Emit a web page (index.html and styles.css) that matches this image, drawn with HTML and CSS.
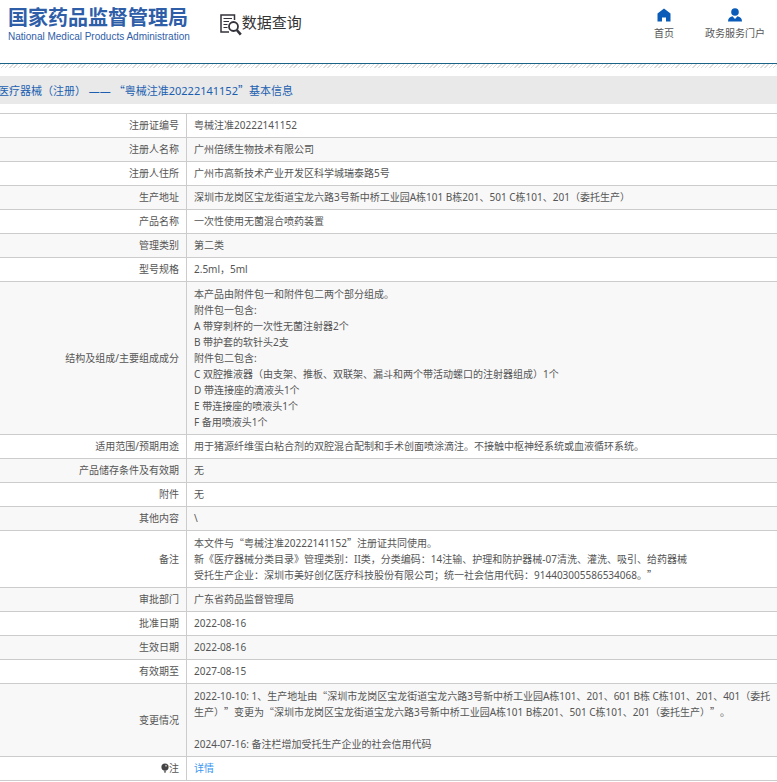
FILE: index.html
```html
<!DOCTYPE html>
<html lang="zh-CN">
<head>
    <meta charset="UTF-8">
    <meta name="viewport" content="width=device-width, initial-scale=1.0">
    <title>国家药品监督管理局 - 数据查询</title>
    <link rel="stylesheet" href="styles.css">
</head>
<body>
    <header class="header">
        <a href="#" class="logo">
            <span class="logo-cn">国家药品监督管理局</span>
            <span class="logo-en">National Medical Products Administration</span>
        </a>
        <a href="#" class="query">
            <svg class="query-icon" width="22" height="22" viewBox="0 0 22 22" fill="none" stroke="#33333b">
                <path d="M14.5 6V1H1v17h8" stroke-width="1.5"/>
                <path d="M3.5 4.5H12M3.5 7.5H9M3.5 10.5H7.5M3.5 13.5H7.5" stroke-width="1.2"/>
                <circle cx="13.5" cy="12.5" r="4.5" stroke-width="1.8"/>
                <path d="M16.8 16l4 4.6" stroke-width="2.6"/>
            </svg>
            <span>数据查询</span>
        </a>
        <nav class="nav">
            <a href="#">
                <svg width="14" height="14" viewBox="0 0 14 14" fill="#0a5cb8">
                    <path d="M7 0.5L0.5 5.5V13.5H5V9.5H9V13.5H13.5V5.5Z"/>
                </svg>
                <span>首页</span>
            </a>
            <a href="#">
                <svg width="14" height="14" viewBox="0 0 14 14" fill="#0a5cb8">
                    <circle cx="7" cy="4" r="3.8"/>
                    <path d="M0 13.5C0 10.5 1.5 9 4.5 8.3L7 11 9.5 8.3C12.5 9 14 10.5 14 13.5Z"/>
                </svg>
                <span>政务服务门户</span>
            </a>
        </nav>
    </header>
    <div class="stripes"></div>

    <main>
        <h1 class="title">医疗器械（注册） —— <span class="zh">“</span>粤械注准20222141152<span class="zh">”</span>基本信息</h1>

        <table class="info">
            <tr><th>注册证编号</th><td>粤械注准20222141152</td></tr>
            <tr><th>注册人名称</th><td>广州倍绣生物技术有限公司</td></tr>
            <tr><th>注册人住所</th><td>广州市高新技术产业开发区科学城瑞泰路5号</td></tr>
            <tr><th>生产地址</th><td>深圳市龙岗区宝龙街道宝龙六路3号新中桥工业园A栋101 B栋201、501 C栋101、201（委托生产）</td></tr>
            <tr><th>产品名称</th><td>一次性使用无菌混合喷药装置</td></tr>
            <tr><th>管理类别</th><td>第二类</td></tr>
            <tr><th>型号规格</th><td>2.5ml，5ml</td></tr>
            <tr class="multi">
                <th>结构及组成/主要组成成分</th>
                <td>本产品由附件包一和附件包二两个部分组成。<br>
                    附件包一包含:<br>
                    A 带穿刺杯的一次性无菌注射器2个<br>
                    B 带护套的软针头2支<br>
                    附件包二包含:<br>
                    C 双腔推液器（由支架、推板、双联架、漏斗和两个带活动螺口的注射器组成）1个<br>
                    D 带连接座的滴液头1个<br>
                    E 带连接座的喷液头1个<br>
                    F 备用喷液头1个</td>
            </tr>
            <tr><th>适用范围/预期用途</th><td>用于猪源纤维蛋白粘合剂的双腔混合配制和手术创面喷涂滴注。不接触中枢神经系统或血液循环系统。</td></tr>
            <tr><th>产品储存条件及有效期</th><td>无</td></tr>
            <tr><th>附件</th><td>无</td></tr>
            <tr><th>其他内容</th><td>\</td></tr>
            <tr class="multi">
                <th>备注</th>
                <td>本文件与<span class="zh">“</span>粤械注准20222141152<span class="zh">”</span>注册证共同使用。<br>
                    新《医疗器械分类目录》管理类别：II类，分类编码：14注输、护理和防护器械-07清洗、灌洗、吸引、给药器械<br>
                    受托生产企业：深圳市美好创亿医疗科技股份有限公司；统一社会信用代码：914403005586534068。<span class="zh">”</span></td>
            </tr>
            <tr><th>审批部门</th><td>广东省药品监督管理局</td></tr>
            <tr><th>批准日期</th><td>2022-08-16</td></tr>
            <tr><th>生效日期</th><td>2022-08-16</td></tr>
            <tr><th>有效期至</th><td>2027-08-15</td></tr>
            <tr class="multi">
                <th>变更情况</th>
                <td>2022-10-10: 1、生产地址由<span class="zh">“</span>深圳市龙岗区宝龙街道宝龙六路3号新中桥工业园A栋101、201、601 B栋 C栋101、201、401（委托生产）<span class="zh">”</span>变更为<span class="zh">“</span>深圳市龙岗区宝龙街道宝龙六路3号新中桥工业园A栋101 B栋201、501 C栋101、201（委托生产）<span class="zh">”</span>。<br>
                    <br>
                    2024-07-16: 备注栏增加受托生产企业的社会信用代码</td>
            </tr>
            <tr>
                <th><svg class="note-icon" width="8" height="10" viewBox="0 0 8 10">
                    <circle cx="4" cy="4" r="3.6" fill="#444"/>
                    <path d="M2.5 7H5.5L4.5 10H3.5Z" fill="#777"/>
                    <circle cx="5" cy="2.8" r="1" fill="#aaa"/>
                </svg>注</th>
                <td><a href="#" class="detail">详情</a></td>
            </tr>
        </table>
    </main>
</body>
</html>
```
FILE: styles.css
```css
body {
    margin: 0;
    background: #fff;
    color: #555;
    font-family: "Noto Sans", "Noto Sans CJK SC", sans-serif;
    font-size: 10px;
    line-height: 16px;
    text-spacing-trim: space-all;
}

a {
    color: inherit;
    text-decoration: none;
}

/* full-width Chinese quotes */
.zh {
    font-family: "Noto Sans CJK SC", sans-serif;
}

.header {
    display: flex;
    align-items: flex-start;
    height: 63px;
    padding: 0 12px 0 8px;
    border-bottom: 1px solid #1b6387;
}

.logo {
    display: flex;
    flex-direction: column;
    padding-top: 7px;
    color: #2f5ea9;
}

.logo-cn {
    font-size: 20px;
    font-weight: bold;
    line-height: 22px;
}

.logo-en {
    font-family: "Liberation Sans", Arial, sans-serif;
    line-height: 16px;
}

.query {
    display: flex;
    padding-top: 11px;
    margin-left: 30px;
    color: #333;
    font-size: 15px;
    line-height: 22px;
}

.query-icon {
    margin-top: 3px;
}

.nav {
    display: flex;
    gap: 31px;
    margin-left: auto;
    padding-top: 8px;
}

.nav a {
    display: flex;
    flex-direction: column;
    align-items: center;
    gap: 3px;
}

.stripes {
    height: 4px;
    background: repeating-linear-gradient(135deg, #ddd 0 1px, #fff 1px 3px);
}

.title {
    margin: 8px 0 9px;
    height: 28px;
    background: #e9e9e9;
    color: #1c5fb0;
    font-size: 11px;
    font-weight: normal;
    line-height: 28px;
    text-indent: -2px;
}

.info {
    width: 100%;
    border-top: 1px solid #ccc;
    border-spacing: 0;
}

.info th,
.info td {
    border-bottom: 1px solid #ccc;
    padding: 3px 7px 4px;
}

.info th {
    box-sizing: border-box;
    width: 187px;
    border-right: 1px solid #ccc;
    font-weight: normal;
    text-align: right;
    white-space: nowrap;
}

.info td {
    padding-right: 3px;
}

.info .multi th,
.info .multi td {
    padding-top: 4px;
}

.info tr:nth-child(even) {
    background: #f8f8f8;
}

.note-icon {
    vertical-align: -1px;
}

.detail {
    color: #3a96f0;
}
```
